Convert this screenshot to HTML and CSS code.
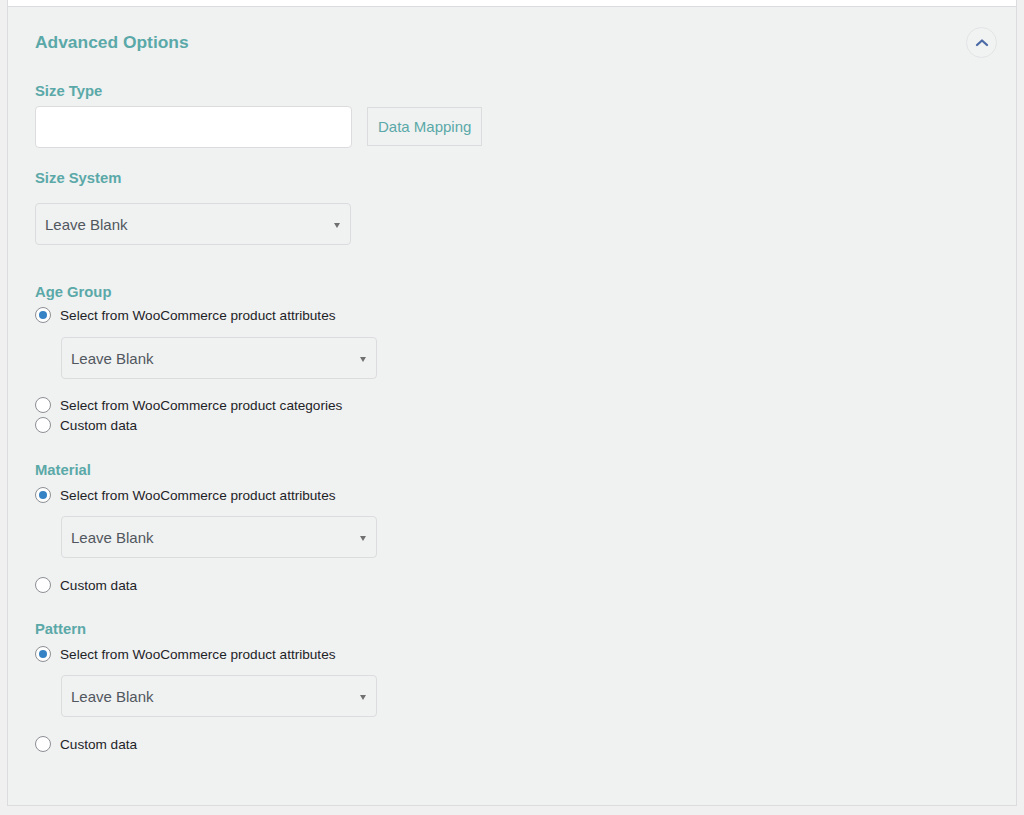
FILE: index.html
```html
<!DOCTYPE html>
<html>
<head>
<meta charset="utf-8">
<link rel="stylesheet" href="styles.css">
</head>
<body>
<div class="page">
  <div class="topbox"></div>
  <div class="panel">
    <div class="header">
      <h2 class="title">Advanced Options</h2>
      <button class="toggle" type="button" aria-label="Collapse">
        <svg width="14" height="9" viewBox="0 0 14 9"><path d="M2 7 L7 2.5 L12 7" fill="none" stroke="#4c6ba6" stroke-width="2.3" stroke-linecap="round" stroke-linejoin="round"/></svg>
      </button>
    </div>

    <div class="label first">Size Type</div>
    <div class="row-inline">
      <div class="text-input"></div>
      <button class="mapping" type="button">Data Mapping</button>
    </div>

    <div class="label l-system">Size System</div>
    <div class="select s-system"><span>Leave Blank</span><i class="caret"></i></div>

    <div class="label l-group">Age Group</div>
    <div class="radio r-first"><span class="dot on"></span>Select from WooCommerce product attributes</div>
    <div class="select indent s-sub"><span>Leave Blank</span><i class="caret"></i></div>
    <div class="radio r-after"><span class="dot"></span>Select from WooCommerce product categories</div>
    <div class="radio"><span class="dot"></span>Custom data</div>

    <div class="label l-material">Material</div>
    <div class="radio r-first2"><span class="dot on"></span>Select from WooCommerce product attributes</div>
    <div class="select indent s-sub2"><span>Leave Blank</span><i class="caret"></i></div>
    <div class="radio r-after2"><span class="dot"></span>Custom data</div>

    <div class="label l-pattern">Pattern</div>
    <div class="radio r-first2"><span class="dot on"></span>Select from WooCommerce product attributes</div>
    <div class="select indent s-sub2"><span>Leave Blank</span><i class="caret"></i></div>
    <div class="radio r-after2"><span class="dot"></span>Custom data</div>
  </div>
</div>
</body>
</html>
```
FILE: styles.css
```css
html, body {
  margin: 0;
  padding: 0;
  background: #f0f0f1;
  font-family: "Liberation Sans", Arial, sans-serif;
}
.page {
  padding: 0 7px 0 7px;
  width: 1024px;
  box-sizing: border-box;
}
.topbox {
  height: 6px;
  background: #ffffff;
  border: 1px solid #dcdcde;
  border-top: none;
}
.panel {
  background: #f0f1f1;
  border: 1px solid #dcdcde;
  border-top: none;
  height: 799px;
  box-sizing: border-box;
  padding: 0 20px 0 27px;
  display: flex;
  flex-direction: column;
  align-items: flex-start;
}
.header {
  align-self: stretch;
  display: flex;
  align-items: center;
  justify-content: space-between;
  height: 30px;
  margin-top: 20px;
}
.title {
  margin: 0;
  font-size: 17.4px;
  font-weight: bold;
  color: #5aa9a8;
  line-height: 22px;
}
.toggle {
  width: 31px;
  height: 31px;
  border-radius: 50%;
  border: 1px solid #e3e4e5;
  background: #f1f2f2;
  display: flex;
  align-items: center;
  justify-content: center;
  padding: 0;
  margin-right: -1px;
}
.label {
  font-size: 14.8px;
  font-weight: bold;
  color: #5aa9a8;
  line-height: 18px;
}
.first { margin-top: 25px; }
.l-system { margin-top: 21px; }
.l-group { margin-top: 38px; }
.l-material { margin-top: 26px; }
.l-pattern { margin-top: 25px; }
.row-inline {
  display: flex;
  align-items: center;
  gap: 15px;
  margin-top: 6px;
}
.text-input {
  width: 315px;
  height: 40px;
  background: #ffffff;
  border: 1px solid #dcdcde;
  border-radius: 4px;
}
.mapping {
  height: 39px;
  padding: 0 10px;
  background: #f0f1f1;
  border: 1px solid #dcdcde;
  border-radius: 0;
  color: #5aa9a8;
  font-family: inherit;
  font-size: 15px;
  margin-top: -2px;
}
.select {
  width: 316px;
  height: 42px;
  box-sizing: border-box;
  border: 1px solid #dcdcde;
  border-radius: 4px;
  background: #f0f1f1;
  display: flex;
  align-items: center;
  justify-content: space-between;
  padding: 0 10px 0 9px;
  font-size: 15px;
  color: #50575e;
}
.s-system { margin-top: 16px; }
.indent { margin-left: 26px; }
.s-sub { margin-top: 12px; }
.s-sub2 { margin-top: 11px; }
.caret {
  width: 0;
  height: 0;
  border-left: 3.5px solid transparent;
  border-right: 3.5px solid transparent;
  border-top: 5px solid #707070;
  margin-top: 2px;
}
.radio {
  display: flex;
  align-items: center;
  height: 20px;
  font-size: 13.6px;
  color: #1d2327;
}
.r-first { margin-top: 4px; }
.r-first2 { margin-top: 6px; }
.r-after { margin-top: 16px; }
.r-after2 { margin-top: 17px; }
.dot {
  width: 16px;
  height: 16px;
  box-sizing: border-box;
  border: 1px solid #8c8f94;
  border-radius: 50%;
  background: #ffffff;
  margin-right: 9px;
  position: relative;
}
.dot.on::after {
  content: "";
  position: absolute;
  left: 3px;
  top: 3px;
  width: 8px;
  height: 8px;
  border-radius: 50%;
  background: #3582c4;
}
```
